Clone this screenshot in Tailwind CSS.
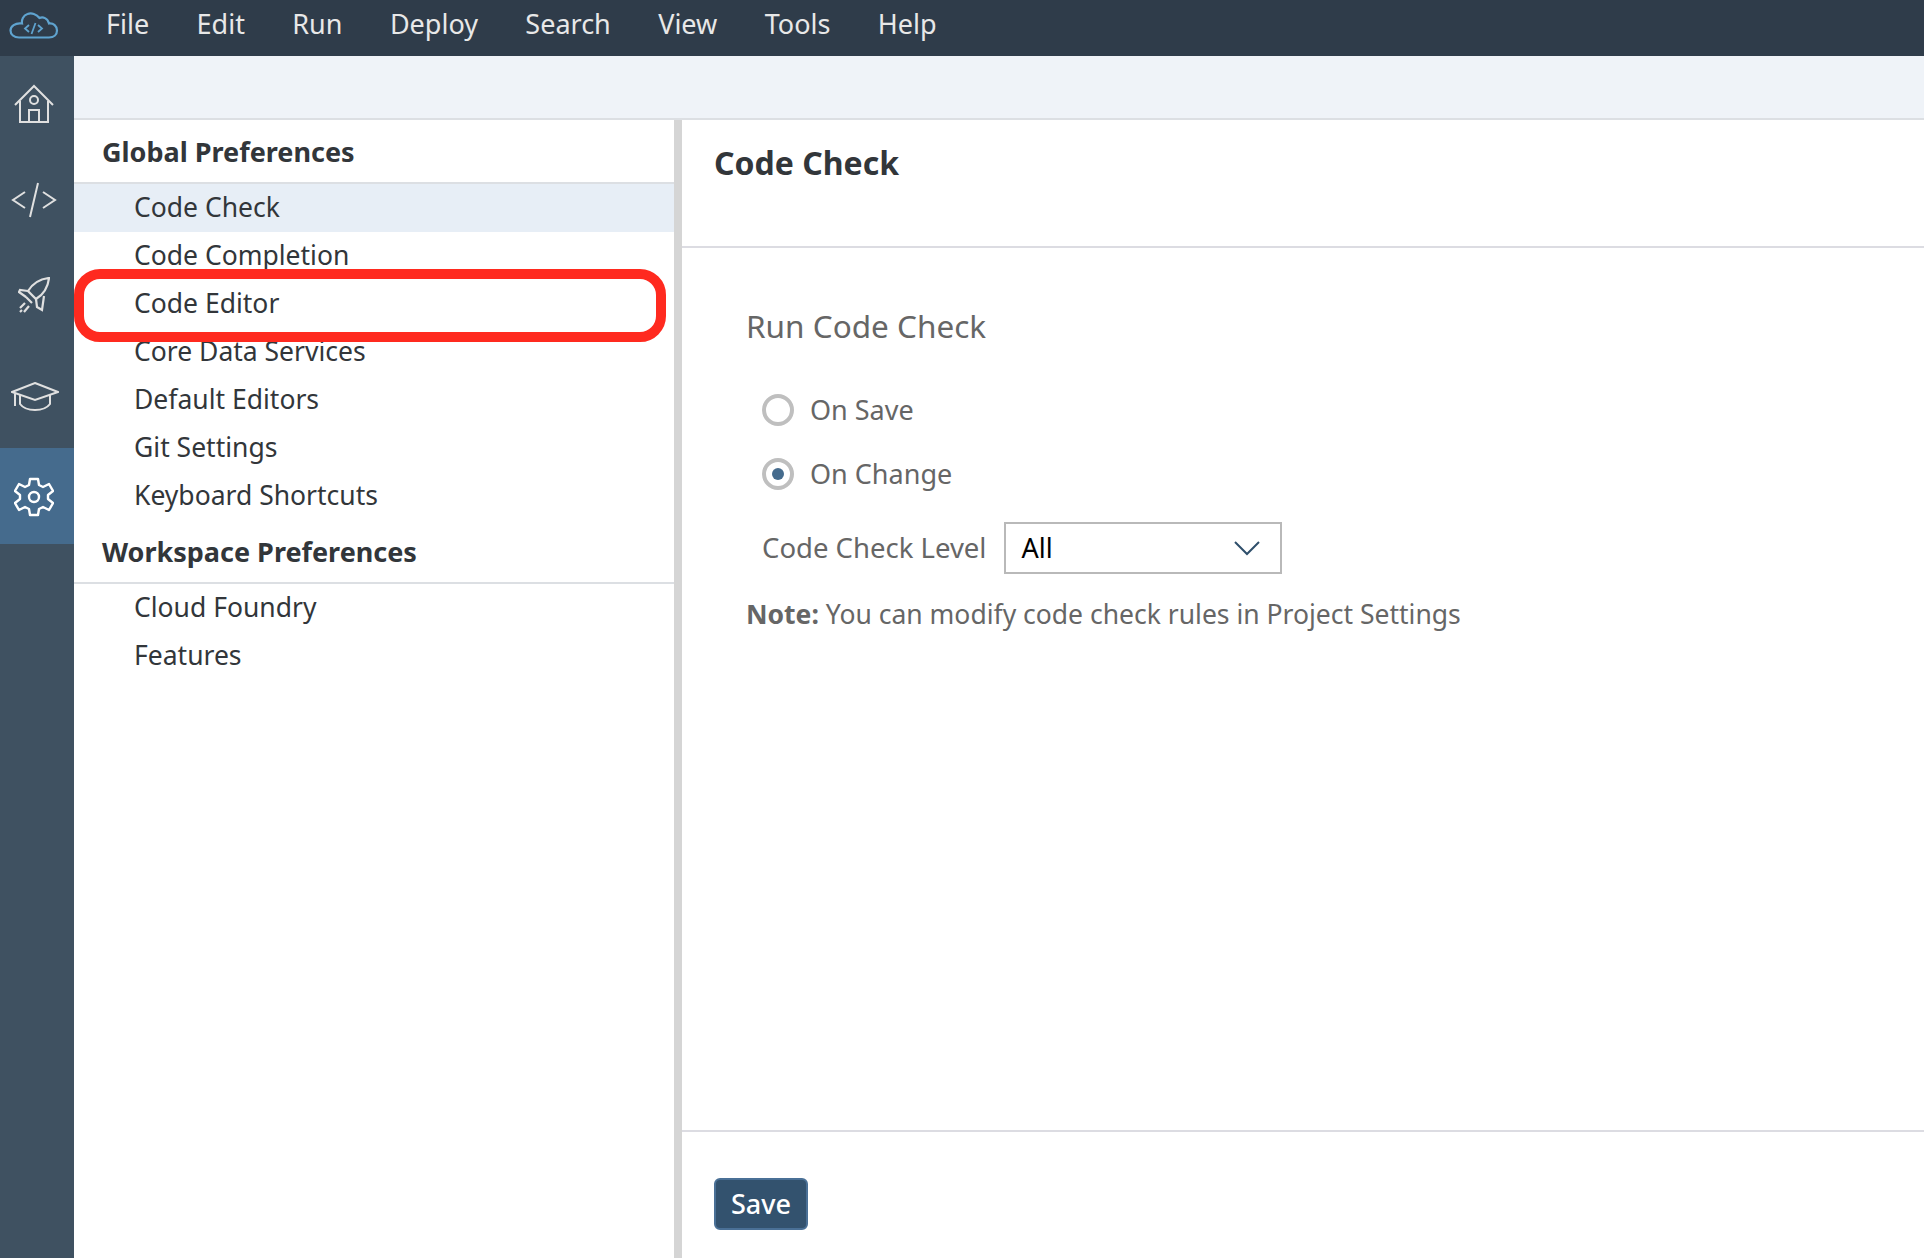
<!DOCTYPE html>
<html lang="en">
<head>
    <meta charset="UTF-8">
    <title>Preferences</title>
    <script src="https://cdn.jsdelivr.net/npm/@tailwindcss/browser@4"></script>
</head>
<body class="bg-white font-['Noto_Sans',sans-serif] overflow-hidden">
<div class="relative flex flex-col h-[1258px] w-[1924px]">
    <!-- Menu bar -->
    <header class="flex items-center h-[56px] bg-[#2f3c4a] text-[#e8e8e8] text-[27px] shrink-0">
        <div class="w-[106px] flex justify-start pl-[9px] -mt-[5px]">
            <svg width="50" height="28" viewBox="0 0 50 28" fill="none" stroke="#5fa3cf" stroke-width="2.200">
                <path d="M10 25.500 H40 C45 25.500 48 22.500 48 18.500 C48 14 44.500 11 40 11.500 C38.500 6 34 4.500 30.500 6 C27.500 2 22.500 0.500 18.500 2 C14 3.500 12.500 8 13 11.500 C6 10.500 1.500 14.500 1.500 18.500 C1.500 22.500 5 25.500 10 25.500 Z"/>
                <path d="M20 13 L16 16.500 L20 20 M29 13 L33 16.500 L29 20 M26.500 11 L22.500 22" stroke-width="1.800"/>
            </svg>
        </div>
        <nav class="flex gap-[47.400px] -mt-[7px]">
            <span>File</span><span>Edit</span><span>Run</span><span>Deploy</span><span>Search</span><span>View</span><span>Tools</span><span>Help</span>
        </nav>
    </header>

    <div class="flex flex-1 min-h-0">
        <!-- Icon rail -->
        <aside class="w-[74px] bg-[#3f5161] shrink-0 flex flex-col">
            <div class="h-[96px] flex items-center justify-center pr-[6px]">
                <svg width="40" height="40" viewBox="0 0 40 40" fill="none" stroke="#e0e0e0" stroke-width="2">
                    <path d="M1 21 L20 2 L39 21"/><path d="M6 17 V38 H34 V17"/><circle cx="20" cy="16" r="4"/><path d="M15 38 V26 H25 V38"/>
                </svg>
            </div>
            <div class="h-[95px] flex items-center justify-center pr-[6px]">
                <svg width="46" height="36" viewBox="0 0 46 36" fill="none" stroke="#e0e0e0" stroke-width="2">
                    <path d="M14 10 L2 18 L14 26 M32 10 L44 18 L32 26 M27 1 L19 35"/>
                </svg>
            </div>
            <div class="h-[98px] flex items-center justify-center pr-[6px] pb-[2px]">
                <svg width="32" height="36" viewBox="0 0 32 36" fill="none" stroke="#e0e0e0" stroke-width="2.200">
                    <path d="M31 1 C22 2 15 6 10 14 L18 22 C26 17 30 10 31 1 Z"/><path d="M10 14 L2 13 L1 15 L8 20 M18 22 L19 30 L24 33 L26 19 M8 20 L14 26"/><path d="M7 26 L2 31 M11 29 L6 35 M2 35 L4 33"/>
                </svg>
            </div>
            <div class="h-[103px] flex items-center justify-center pr-[4px]">
                <svg width="48" height="30" viewBox="0 0 48 30" fill="none" stroke="#e0e0e0" stroke-width="2">
                    <path d="M24 1 L47 10 L24 18 L1 10 Z"/><path d="M4 12 V24 M9 13 V22 C15 30 33 30 39 22 V13"/>
                </svg>
            </div>
            <div class="h-[96px] bg-[#456b8d] flex items-center justify-center pr-[6px] pt-[2px]">
                <svg width="40" height="40" viewBox="0 0 40 40" fill="none" stroke="#fff" stroke-width="2.400">
                    <path d="M16 2 H24 L25 8 L29 10 L35 7 L39 14 L34 18 V22 L39 26 L35 33 L29 30 L25 32 L24 38 H16 L15 32 L11 30 L5 33 L1 26 L6 22 V18 L1 14 L5 7 L11 10 L15 8 Z" stroke-linejoin="round"/><circle cx="20" cy="20" r="5"/>
                </svg>
            </div>
        </aside>

        <div class="flex flex-col flex-1 min-w-0">
            <div class="h-[64px] bg-[#eff3f8] border-b-2 border-[#dcdfe3] shrink-0"></div>
            <div class="flex flex-1 min-h-0">
                <!-- Preference tree -->
                <div class="w-[600px] shrink-0 text-[#32363a] text-[26.500px]">
                    <h2 class="h-[64px] border-b-2 border-[#dcdfe3] flex items-center pl-[28px] pt-[2px] font-bold text-[27px]">Global Preferences</h2>
                    <ul>
                        <li class="h-[48px] flex items-center pl-[60px] bg-[#e7eef6]">Code Check</li>
                        <li class="h-[48px] flex items-center pl-[60px]">Code Completion</li>
                        <li class="h-[48px] flex items-center pl-[60px]">Code Editor</li>
                        <li class="h-[48px] flex items-center pl-[60px]">Core Data Services</li>
                        <li class="h-[48px] flex items-center pl-[60px]">Default Editors</li>
                        <li class="h-[48px] flex items-center pl-[60px]">Git Settings</li>
                        <li class="h-[48px] flex items-center pl-[60px]">Keyboard Shortcuts</li>
                    </ul>
                    <h2 class="h-[64px] border-b-2 border-[#dcdfe3] flex items-center pl-[28px] pt-[2px] font-bold text-[27px]">Workspace Preferences</h2>
                    <ul>
                        <li class="h-[48px] flex items-center pl-[60px]">Cloud Foundry</li>
                        <li class="h-[48px] flex items-center pl-[60px]">Features</li>
                    </ul>
                </div>
                <div class="w-[8px] bg-[#d5d5d5] shrink-0"></div>

                <!-- Settings pane -->
                <main class="flex flex-col flex-1 min-w-0 text-[#666]">
                    <div class="h-[128px] border-b-2 border-[#dcdce2] pl-[32px] pt-[21px] shrink-0">
                        <h1 class="text-[32px] leading-[44px] font-bold text-[#32363a]">Code Check</h1>
                    </div>
                    <div class="flex-1 pl-[64px] pt-[55px] text-[27px]">
                        <h3 class="text-[31.500px] leading-[46px]">Run Code Check</h3>
                        <div class="pl-[16px] mt-[43px] flex flex-col gap-[28px]">
                            <label class="flex items-center gap-[16px] h-[36px]">
                                <span class="w-[32px] h-[32px] rounded-full border-[4px] border-[#bfbfbf] bg-white"></span>On Save
                            </label>
                            <label class="flex items-center gap-[16px] h-[36px]">
                                <span class="w-[32px] h-[32px] rounded-full border-[4px] border-[#bfbfbf] bg-white flex items-center justify-center"><span class="w-[12px] h-[12px] rounded-full bg-[#456b8d]"></span></span>On Change
                            </label>
                            <div class="flex items-center gap-[18px] mt-[2px]">
                                <span class="text-[27.500px]">Code Check Level</span>
                                <div class="w-[278px] h-[52px] border-2 border-[#b9b9b9] flex items-center justify-between pl-[15px] pr-[20px] text-black">
                                    <span>All</span>
                                    <svg width="26" height="16" viewBox="0 0 26 16" fill="none" stroke="#2f4f6b" stroke-width="2"><path d="M1 2 L13 14 L25 2"/></svg>
                                </div>
                            </div>
                        </div>
                        <p class="mt-[16px] leading-[48px] text-[26.500px]"><b>Note:</b> You can modify code check rules in Project Settings</p>
                    </div>
                    <div class="h-[128px] border-t-2 border-[#dcdce2] pl-[32px] pt-[46px] shrink-0">
                        <button class="w-[94px] h-[52px] rounded-[6px] bg-[#33526e] border-2 border-[#4a7096] text-white text-[27px] font-medium">Save</button>
                    </div>
                </main>
            </div>
        </div>
    </div>

    <!-- Red highlight around Code Editor -->
    <div class="absolute left-[74px] top-[269px] w-[592px] h-[73px] border-[10px] border-[#ff2a1f] rounded-[26px]"></div>
</div>
</body>
</html>
